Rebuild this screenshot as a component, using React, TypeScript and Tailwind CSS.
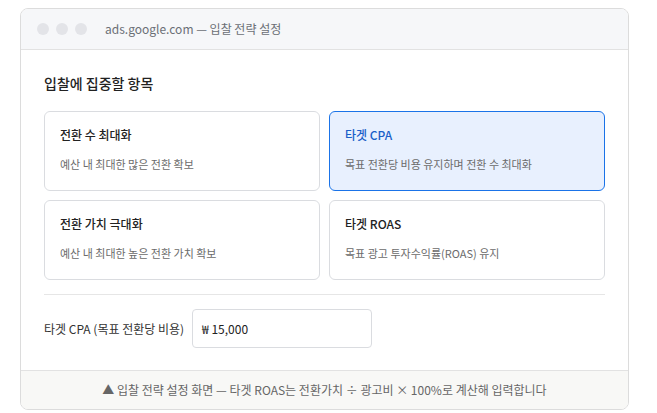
const options = [
  { title: "전환 수 최대화", desc: "예산 내 최대한 많은 전환 확보", active: false },
  { title: "타겟 CPA", desc: "목표 전환당 비용 유지하며 전환 수 최대화", active: true },
  { title: "전환 가치 극대화", desc: "예산 내 최대한 높은 전환 가치 확보", active: false },
  { title: "타겟 ROAS", desc: "목표 광고 투자수익률(ROAS) 유지", active: false },
];

export default function App() {
  return (
    <div
      className="w-[657px] h-[413px] bg-white pt-[8px] pl-[20px]"
      style={{ fontFamily: '"Noto Sans CJK KR", "Noto Sans", sans-serif' }}
    >
      <div className="w-[609px] h-[402px] rounded-[8px] border border-[#dcdcdc] overflow-hidden flex flex-col">
        <div className="h-[41px] shrink-0 bg-[#f6f7f9] border-b border-[#e2e2e2] flex items-center pl-[16px] gap-[7px]">
          <span className="w-[12px] h-[12px] rounded-full bg-[#e3e4e8]" />
          <span className="w-[12px] h-[12px] rounded-full bg-[#e3e4e8]" />
          <span className="w-[12px] h-[12px] rounded-full bg-[#e3e4e8]" />
          <span className="ml-[11px] text-[12px] text-[#6b6f76]">ads.google.com — 입찰 전략 설정</span>
        </div>
        <div className="flex-1 px-[23px] pt-[23px]">
          <div className="text-[14px] font-medium text-[#222] leading-[20px]">입찰에 집중할 항목</div>
          <div className="mt-[18px] grid grid-cols-2 gap-x-[9px] gap-y-[9px]">
            {options.map((o) => (
              <div
                key={o.title}
                className={`h-[80px] rounded-[6px] border px-[15px] pt-[14px] ${
                  o.active ? "border-[#1a73e8] bg-[#e8f0fe]" : "border-[#dadce0] bg-white"
                }`}
              >
                <div className={`text-[12px] font-medium leading-[18px] ${o.active ? "text-[#1a5fc8]" : "text-[#222]"}`}>
                  {o.title}
                </div>
                <div className="mt-[12px] text-[11px] text-[#6b6b6b] leading-[16px]">{o.desc}</div>
              </div>
            ))}
          </div>
          <div className="mt-[14px] border-t border-[#e6e6e6]" />
          <div className="mt-[14px] flex items-center gap-[8px]">
            <span className="text-[12px] text-[#333]">타겟 CPA (목표 전환당 비용)</span>
            <div className="w-[180px] h-[39px] rounded-[4px] border border-[#dadce0] flex items-center px-[9px] text-[12px] text-[#222]">
              ₩ 15,000
            </div>
          </div>
        </div>
        <div className="h-[39px] shrink-0 bg-[#f8f8f6] border-t border-[#e2e2e2] flex items-center justify-center text-[12px] text-[#666]">
          ▲ 입찰 전략 설정 화면 — 타겟 ROAS는 전환가치 ÷ 광고비 × 100%로 계산해 입력합니다
        </div>
      </div>
    </div>
  );
}
